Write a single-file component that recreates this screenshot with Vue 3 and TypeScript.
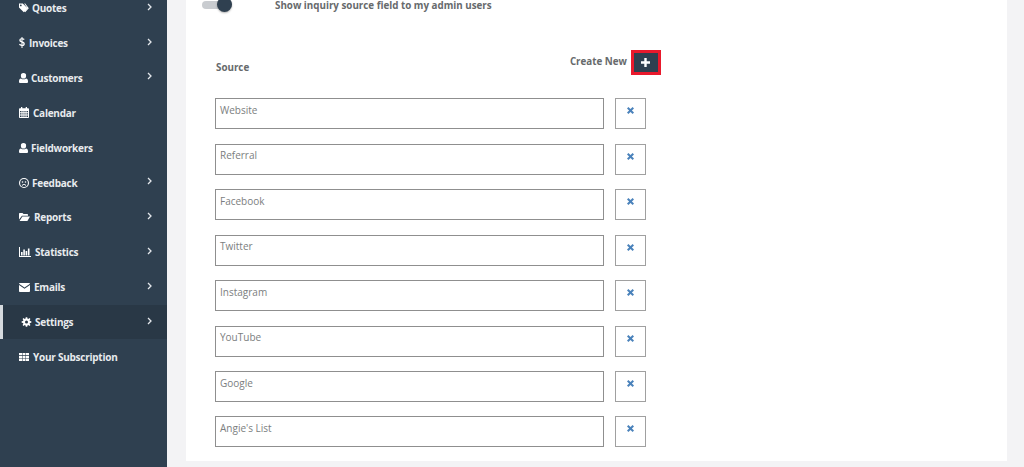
<template>
  <div class="page">
    <aside class="sidebar">
      <nav class="menu">
        <a
          v-for="item in menu"
          :key="item.label"
          class="menu-item"
          :class="{ active: item.active }"
        >
          <svg class="menu-icon" :width="item.w" height="12" :viewBox="`0 0 ${item.w} 12`" aria-hidden="true">
            <path :d="item.d" fill="#fff" fill-rule="evenodd" />
          </svg>
          <span class="menu-label">{{ item.label }}</span>
          <svg v-if="item.arrow" class="chevron" width="5" height="8" viewBox="0 0 5 8" aria-hidden="true">
            <path d="M1 1l3 3-3 3" fill="none" stroke="#e4e8ec" stroke-width="1.3" />
          </svg>
        </a>
      </nav>
    </aside>

    <main class="content">
      <section class="card">
        <div class="toggle-row">
          <span class="toggle"><span class="knob"></span></span>
          <span class="toggle-label">Show inquiry source field to my admin users</span>
        </div>

        <div class="source-head">
          <span class="source-title">Source</span>
          <div class="create">
            <span class="create-label">Create New</span>
            <button class="add-btn" type="button">
              <svg width="9" height="9" viewBox="0 0 9 9" aria-hidden="true">
                <path d="M3.300 0h2.400v3.300H9v2.400H5.700V9H3.300V5.700H0V3.300h3.300z" fill="#fff" />
              </svg>
            </button>
          </div>
        </div>

        <div class="source-list">
          <div v-for="source in sources" :key="source" class="source-row">
            <div class="source-input">{{ source }}</div>
            <button class="remove-btn" type="button">
              <svg width="7" height="7" viewBox="0 0 8 8" aria-hidden="true">
                <path d="M1.600 0L4 2.400 6.400 0 8 1.600 5.600 4 8 6.400 6.400 8 4 5.600 1.600 8 0 6.400 2.400 4 0 1.600z" fill="#4a82bb" />
              </svg>
            </button>
          </div>
        </div>
      </section>
    </main>
  </div>
</template>

<script setup lang="ts">
interface MenuItem {
  label: string
  d: string
  w: number
  arrow?: boolean
  active?: boolean
}

const user = 'M4.500 1a2.600 2.600 0 0 1 2.600 2.800A2.600 2.600 0 0 1 4.500 6.600a2.600 2.600 0 0 1-2.600-2.800A2.600 2.600 0 0 1 4.500 1zM2 6.400c.7.6 1.500.9 2.500.9s1.800-.3 2.500-.9c1.200.2 2 1.200 2 2.800V10a1 1 0 0 1-1 1H1a1 1 0 0 1-1-1v-.8c0-1.600.8-2.600 2-2.800z'

// eight toothed cog, centred in a 9x12 icon box
function cogPath(): string {
  const cx = 4.5
  const cy = 6
  const point = (deg: number, r: number) => {
    const a = (deg * Math.PI) / 180
    return `${(cx + r * Math.cos(a)).toFixed(2)} ${(cy + r * Math.sin(a)).toFixed(2)}`
  }
  const pts: string[] = []
  for (let i = 0; i < 8; i++) {
    const a = i * 45
    pts.push(point(a - 15, 3.6), point(a - 9, 4.9), point(a + 9, 4.9), point(a + 15, 3.6))
  }
  return `M${pts.join('L')}zM${cx - 1.5} ${cy}a1.500 1.500 0 1 0 3 0a1.500 1.500 0 1 0-3 0z`
}

const menu: MenuItem[] = [
  { label: 'Quotes', w: 9, arrow: true, d: 'M0 1.500h3.800L8.600 6.300 4.800 10.200 0 5.400zM1.800 2.500a.9.9 0 1 0 0 1.800.9.9 0 0 0 0-1.800zM5.200 1.500h1l3.600 4.800-3.600 3.900-.7-.7 3-3.200z' },
  { label: 'Invoices', w: 6, arrow: true, d: 'M2.500 0h1v1.300c.9.1 1.600.4 2.100.8l-.6 1c-.5-.4-1-.6-1.500-.7v2.200c1.400.4 2.300 1 2.300 2.300 0 1.200-.9 2-2.300 2.100V11h-1V8.900C1.500 8.800.7 8.400 0 7.800l.7-1c.6.5 1.200.8 1.800.9V5.400C1.200 5 .3 4.400.3 3.200c0-1.100.9-1.800 2.200-1.900zm0 2.300c-.6.1-.9.4-.9.8 0 .4.3.7.9.9zm1 3.800v1.800c.6-.1 1-.4 1-.9s-.4-.7-1-.9z' },
  { label: 'Customers', w: 8, arrow: true, d: user },
  { label: 'Calendar', w: 10, d: 'M2 0h1.300v1.300h3.400V0H8v1.300h1.200c.4 0 .8.4.8.8v8.100c0 .4-.4.8-.8.8H.8c-.4 0-.8-.4-.8-.8V2.100c0-.4.4-.8.8-.8H2zM1 4v1.300h1.500V4zm2.400 0v1.300h1.100V4zm2 0v1.300h1.200V4zm2.100 0v1.300H9V4zM1 6.200v1.300h1.500V6.200zm2.400 0v1.300h1.100V6.200zm2 0v1.300h1.200V6.200zm2.100 0v1.300H9V6.200zM1 8.400V10h1.500V8.400zm2.400 0V10h1.100V8.400zm2 0V10h1.200V8.400zm2.100 0V10H9V8.400z' },
  { label: 'Fieldworkers', w: 8, d: user },
  { label: 'Feedback', w: 9, arrow: true, d: 'M5 1a5 5 0 1 1 0 10A5 5 0 0 1 5 1zm0 1.100a3.900 3.900 0 1 0 0 7.800 3.900 3.900 0 0 0 0-7.800zM3.500 4.200a.8.8 0 1 1 0 1.600.8.8 0 0 1 0-1.600zm3 0a.8.8 0 1 1 0 1.600.8.8 0 0 1 0-1.600zM2.800 8.400C3.200 7.400 4 6.900 5 6.900s1.800.5 2.200 1.500l-.8.300C6.100 8.100 5.600 7.800 5 7.800s-1.100.3-1.400.9z' },
  { label: 'Reports', w: 11, arrow: true, d: 'M0 3c0-.6.4-1 1-1h2.500l1 1H8c.6 0 1 .4 1 1v.8H3L0 8.500zM3.400 5.600H11L8.400 10H.6z' },
  { label: 'Statistics', w: 12, arrow: true, d: 'M0 1h1v9h11v1H0zM2 6h1.600v3.400H2zM4.300 3.500h1.600v5.900H4.300zM6.600 5h1.600v4.400H6.600zM8.900 2.500h1.600v6.900H8.900z' },
  { label: 'Emails', w: 11, arrow: true, d: 'M.8 2h9.400c.4 0 .8.3.8.7L5.500 6.500 0 2.700C0 2.300.4 2 .8 2zM0 4l5.500 3.700L11 4v6c0 .5-.4 1-1 1H1c-.6 0-1-.5-1-1z' },
  { label: 'Settings', w: 9, arrow: true, active: true, d: cogPath() },
  { label: 'Your Subscription', w: 10, d: 'M0 2h3v2.300H0zM3.500 2h3v2.300h-3zM7 2h3v2.300H7zM0 4.900h3v2.300H0zM3.500 4.900h3v2.300h-3zM7 4.900h3v2.300H7zM0 7.800h3V10H0zM3.500 7.800h3V10h-3zM7 7.800h3V10H7z' },
]

const sources: string[] = [
  'Website',
  'Referral',
  'Facebook',
  'Twitter',
  'Instagram',
  'YouTube',
  'Google',
  "Angie's List",
]
</script>

<style>
html,
body {
  margin: 0;
  background: #f3f3f5;
}
</style>

<style scoped>
.page {
  display: flex;
  height: 467px;
  overflow: hidden;
  font-family: "Open Sans", "Liberation Sans", sans-serif;
  background: #f3f3f5;
}

.sidebar {
  flex: 0 0 167px;
  background: #2f4050;
}

.menu {
  display: flex;
  flex-direction: column;
  margin-top: -9.3px;
}

.menu-item {
  display: flex;
  align-items: center;
  height: 34.88px;
  padding-left: 19px;
  padding-right: 15px;
  color: #e8ebee;
  font-size: 10px;
  font-weight: 700;
  letter-spacing: -0.25px;
  box-sizing: border-box;
}

.menu-item.active {
  background: #293846;
  border-left: 3px solid #d6dade;
  padding-left: 19px;
}

.menu-icon {
  flex: none;
  margin-right: 4px;
  overflow: visible;
}

.chevron {
  margin-left: auto;
  margin-top: -3px;
}

.content {
  flex: 1;
  padding-left: 19px;
  padding-right: 17px;
}

.card {
  height: 461px;
  box-sizing: border-box;
  padding-left: 29px;
  background: #fff;
}

.toggle-row {
  display: flex;
  align-items: center;
  height: 10px;
}

.toggle {
  position: relative;
  width: 30px;
  height: 8px;
  margin-left: -13px;
  border-radius: 4px;
  background: #c9ccd0;
}

.knob {
  position: absolute;
  right: 0;
  top: -4px;
  width: 15px;
  height: 15px;
  border-radius: 50%;
  background: #2f4050;
  box-shadow: 0 1px 2px rgba(0, 0, 0, 0.3);
}

.toggle-label {
  margin-left: 43px;
  margin-top: 2px;
  color: #676a6c;
  font-size: 9.8px;
  font-weight: 700;
  line-height: 10px;
}

.source-head {
  display: flex;
  justify-content: space-between;
  width: 446px;
  margin-top: 40px;
  color: #676a6c;
  font-size: 9.8px;
  font-weight: 700;
}

.source-title {
  margin-top: 11px;
  margin-left: 1px;
}

.create {
  display: flex;
  align-items: center;
  gap: 4px;
}

.create-label {
  margin-top: -3px;
}

.add-btn {
  display: flex;
  align-items: center;
  justify-content: center;
  width: 30px;
  height: 25px;
  padding: 0 1px 1px 0;
  border: 3px solid #e8192c;
  background: #2f4050;
}

.source-list {
  display: flex;
  flex-direction: column;
  gap: 14.43px;
  margin-top: 23.4px;
}

.source-row {
  display: flex;
  gap: 11px;
}

.source-input {
  width: 389px;
  height: 31px;
  box-sizing: border-box;
  padding: 3.6px 4px 0;
  border: 1px solid #8f8f8f;
  color: #7b7e80;
  font-size: 10px;
  line-height: 14px;
}

.remove-btn {
  display: flex;
  align-items: center;
  justify-content: center;
  width: 31px;
  height: 31px;
  padding: 0 0 6px;
  border: 1px solid #a0a0a0;
  background: #fff;
}
</style>
